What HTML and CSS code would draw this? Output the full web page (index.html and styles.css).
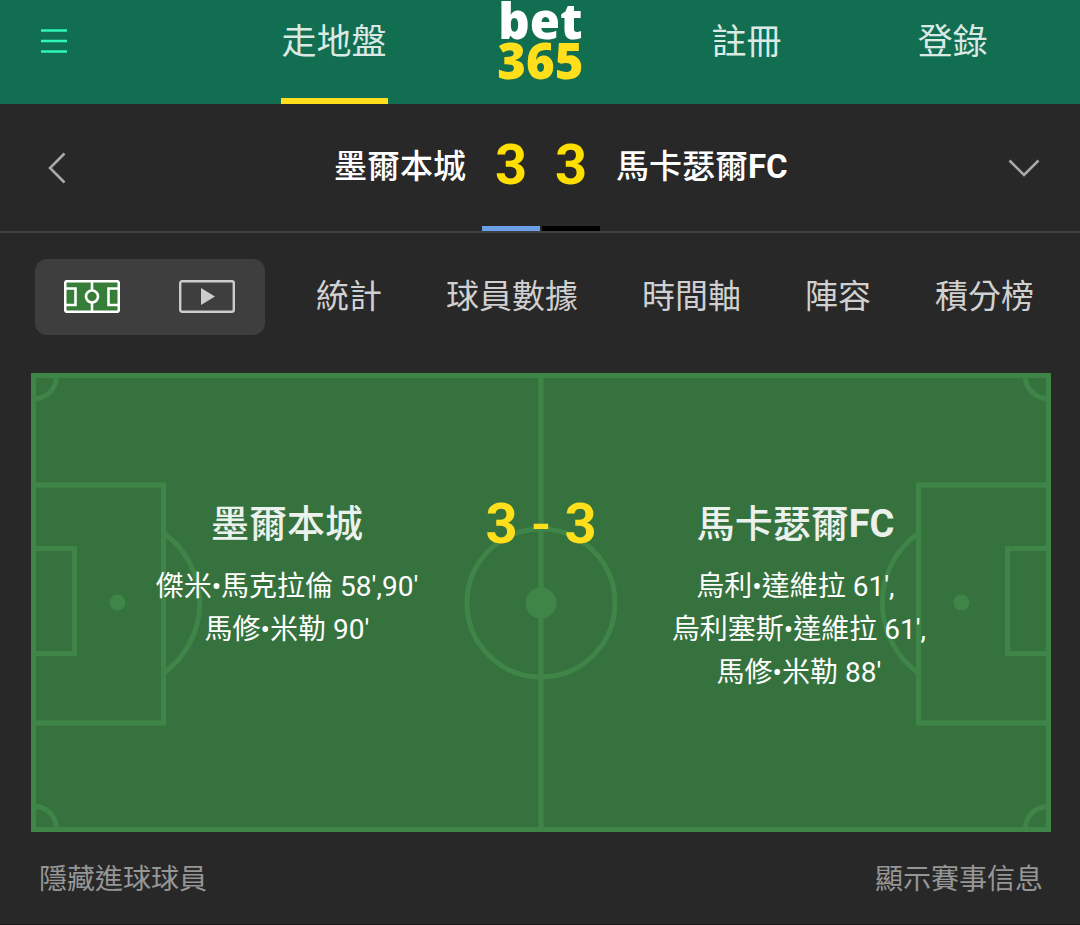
FILE: index.html
```
<!DOCTYPE html>
<html lang="zh-Hant">
<head>
    <meta charset="UTF-8">
    <meta name="viewport" content="width=device-width, initial-scale=1.0">
    <title>墨爾本城 3 - 3 馬卡瑟爾FC</title>
    <link rel="stylesheet" href="styles.css">
</head>
<body>
    <header class="header">
        <button class="menu-button" type="button" aria-label="選單">
            <svg width="26" height="24" viewBox="0 0 26 24"><path d="M0 1.500h26M0 12h26M0 22.500h26" stroke="#2ff5b5" stroke-width="2.400"/></svg>
        </button>
        <nav class="main-nav">
            <a class="nav-link active" href="#">走地盤</a>
            <a class="logo" href="#"><span class="logo-bet">bet</span><span class="logo-365">365</span></a>
            <a class="nav-link" href="#">註冊</a>
            <a class="nav-link" href="#">登錄</a>
        </nav>
    </header>

    <section class="scoreboard">
        <button class="icon-button back" type="button" aria-label="返回">
            <svg width="18" height="32" viewBox="0 0 18 32"><path d="M16.500 1.500L2 16l14.500 14.500" fill="none" stroke="#a9a9a9" stroke-width="2.600"/></svg>
        </button>
        <div class="match">
            <span class="match-team home">墨爾本城</span>
            <span class="match-score blue">3</span>
            <span class="match-score black">3</span>
            <span class="match-team">馬卡瑟爾<b>FC</b></span>
        </div>
        <button class="icon-button" type="button" aria-label="展開">
            <svg width="32" height="18" viewBox="0 0 32 18"><path d="M1.500 1.500L16 16L30.500 1.500" fill="none" stroke="#a9a9a9" stroke-width="2.600"/></svg>
        </button>
    </section>

    <div class="tabs">
        <div class="view-switch">
            <button class="view-button" type="button" aria-label="球場">
                <svg width="56" height="33" viewBox="0 0 56 33" fill="none" stroke="#fff" stroke-width="2.600">
                    <rect x="1.200" y="1.200" width="53.600" height="30.600" rx="2" fill="#367d38"/>
                    <path d="M28 1v10M28 22v10M2 8.500h9.500v16.500H2M54 8.500h-9.500v16.500H54"/>
                    <circle cx="28" cy="16.500" r="6"/>
                </svg>
            </button>
            <button class="view-button" type="button" aria-label="直播">
                <svg width="56" height="33" viewBox="0 0 56 33">
                    <rect x="1.200" y="1.200" width="53.600" height="30.600" rx="2" fill="none" stroke="#ccc" stroke-width="2.400"/>
                    <path d="M22 8l14 8.500L22 25z" fill="#ccc"/>
                </svg>
            </button>
        </div>
        <nav class="tab-list">
            <a href="#">統計</a>
            <a href="#">球員數據</a>
            <a href="#">時間軸</a>
            <a href="#">陣容</a>
            <a href="#">積分榜</a>
        </nav>
    </div>

    <main class="pitch">
        <svg class="pitch-lines" viewBox="0 0 1020 459" fill="none" stroke="#3f8548" stroke-width="5">
            <rect x="2.500" y="2.500" width="1015" height="454" fill="#36723d"/>
            <path d="M510 3v453"/>
            <circle cx="510" cy="230" r="74"/>
            <circle cx="510" cy="230" r="15.500" fill="#3f8548" stroke="none"/>
            <!-- left half -->
            <path d="M3 112h129.500v238H3M3 175.500h40.500v105H3M134 161A86 86 0 0 1 134 299"/>
            <circle cx="86.500" cy="229.500" r="8" fill="#3f8548" stroke="none"/>
            <!-- right half -->
            <path d="M1017 112H887.500v238H1017M1017 175.500h-40.500v105h40.500M886 161A86 86 0 0 0 886 299"/>
            <circle cx="930.500" cy="229.500" r="8" fill="#3f8548" stroke="none"/>
            <!-- corners -->
            <path d="M25.500 4A22 22 0 0 1 4 25.500M994.500 4A22 22 0 0 0 1016 25.500M25.500 455A22 22 0 0 0 4 433.500M994.500 455A22 22 0 0 1 1016 433.500"/>
        </svg>
        <div class="result">
            <div class="result-team home">
                <h2>墨爾本城</h2>
                <p>傑米•馬克拉倫 58',90'</p>
                <p>馬修•米勒 90'</p>
            </div>
            <div class="result-score"><b>3</b> - <b>3</b></div>
            <div class="result-team away">
                <h2>馬卡瑟爾<b>FC</b></h2>
                <p>烏利•達維拉 61',</p>
                <p>&nbsp;烏利塞斯•達維拉 61',</p>
                <p>&nbsp;馬修•米勒 88'</p>
            </div>
        </div>
    </main>

    <footer class="footer">
        <button type="button">隱藏進球球員</button>
        <button type="button">顯示賽事信息</button>
    </footer>
</body>
</html>
```
FILE: styles.css
```
* {
    box-sizing: border-box;
}

body {
    margin: 0;
    background-color: #282828;
    color: #fff;
    font-family: Roboto, "Noto Sans CJK TC", sans-serif;
}

button {
    background: none;
    border: none;
    padding: 0;
    font-family: inherit;
    color: inherit;
    cursor: pointer;
}

a {
    color: inherit;
    text-decoration: none;
}

svg {
    display: block;
}

.header {
    display: flex;
    height: 104px;
    padding-right: 24px;
    background-color: #126e51;
}

.menu-button {
    width: 231px;
    height: 82px;
    padding-left: 41px;
}

.main-nav {
    flex: 1;
    display: grid;
    grid-template-columns: repeat(4, 1fr);
    justify-items: center;
}

.nav-link {
    height: 104px;
    padding: 0 1px;
    line-height: 86px;
    font-size: 35px;
    color: #dbe9e4;
}

.nav-link.active {
    border-bottom: 6px solid #ffdf1b;
}

.logo {
    display: flex;
    flex-direction: column;
    align-items: center;
    font-family: "Noto Sans", sans-serif;
    font-size: 49px;
    font-weight: 900;
    line-height: 40px;
}

.logo-365 {
    color: #ffdf1b;
}

.scoreboard {
    display: flex;
    align-items: stretch;
    height: 129px;
    border-bottom: 2px solid #404040;
}

.icon-button {
    width: 112px;
    display: flex;
    align-items: center;
    justify-content: center;
}

.icon-button.back {
    width: 114px;
}

.match {
    flex: 1;
    display: grid;
    grid-template-columns: 1fr 58px 58px 1fr;
    column-gap: 2px;
    text-align: center;
}

.match-team {
    padding: 0 14px;
    font-size: 33px;
    font-weight: 500;
    line-height: 126px;
    text-align: left;
}

.match-team.home {
    text-align: right;
}

.match-score {
    border-bottom: 5px solid #000;
    color: #ffdf00;
    font-size: 56px;
    font-weight: 700;
    line-height: 122px;
}

.match-score.blue {
    border-color: #6b9fe8;
}

.tabs {
    display: flex;
    padding: 26px 46px 38px 35px;
}

.view-switch {
    display: flex;
    width: 230px;
    height: 76px;
    border-radius: 12px;
    background-color: #3e3e3e;
}

.view-button {
    flex: 1;
    display: flex;
    align-items: center;
    justify-content: center;
    padding: 0 2px 2px 0;
}

.tab-list {
    flex: 1;
    display: flex;
    justify-content: space-between;
    margin-left: 51px;
    font-size: 33px;
    line-height: 76px;
    color: #d0d0d0;
}

/* lines and result share one grid cell */
.pitch {
    display: grid;
    margin: 0 29px 0 31px;
}

.pitch-lines,
.result {
    grid-area: 1 / 1;
}

.pitch-lines {
    width: 100%;
}

.result {
    display: grid;
    grid-template-columns: 1fr 150px 1fr;
    padding-top: 121px;
    text-align: center;
}

.result-team.home {
    padding-left: 77px;
}

.result-team.away {
    padding-right: 76px;
}

.result-team h2 {
    margin: 0 0 11px;
    font-size: 38px;
    font-weight: 500;
    line-height: 60px;
    color: #ebf1ec;
}

.result-team p {
    margin: 0;
    font-size: 28px;
    line-height: 43px;
    white-space: nowrap;
}

.result-score {
    font-size: 56px;
    font-weight: 500;
    line-height: 60px;
    color: #ffdf1b;
}

.footer {
    display: flex;
    justify-content: space-between;
    height: 93px;
    padding: 3px 37px 0 39px;
    border-bottom: 1px solid #1a1a1a;
}

.footer button {
    font-size: 28px;
    line-height: 88px;
    color: #969696;
}
```
